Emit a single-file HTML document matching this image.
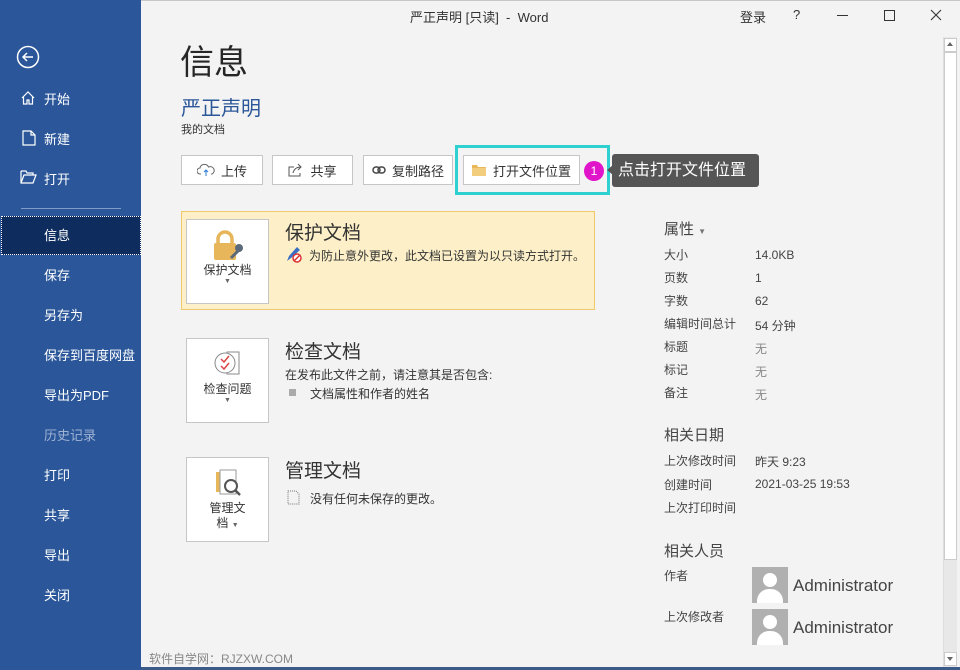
<!DOCTYPE html>
<html><head><meta charset="utf-8"><style>
*{margin:0;padding:0;box-sizing:border-box}
body{width:960px;height:670px;overflow:hidden;background:#f3f3f3;font-family:"Liberation Sans","Noto Sans CJK SC",sans-serif;position:relative;color:#444}
.abs{position:absolute}
.side{left:0;top:0;width:141px;height:670px;background:#2b579a;color:#fff}
.side .it{position:absolute;left:44px;font-size:13px;color:#fff}
.t13{font-size:13px}
.btn{position:absolute;top:155px;height:30px;border:1px solid #c6c6c6;background:#fff;font-size:13px;color:#333;display:flex;align-items:center;justify-content:center;gap:6px}
.card{position:absolute;width:83px;height:85px;border:1px solid #c6c6c6;background:#fff;font-size:12px;color:#333;text-align:center}
.h2{position:absolute;font-size:19px;color:#333}
.lbl{position:absolute;left:664px;font-size:12px;color:#444}
.val{position:absolute;left:755px;font-size:12px;color:#444}
.h3{position:absolute;left:664px;font-size:15px;color:#444}
.av{position:absolute;left:752px;width:36px;height:36px;background:#b0b0b0;overflow:hidden}
.av:before{content:"";position:absolute;left:11px;top:6px;width:14px;height:14px;border-radius:50%;background:#fff}
.av:after{content:"";position:absolute;left:5px;top:22px;width:26px;height:20px;border-radius:12px 12px 0 0;background:#fff}
</style></head><body>
<div class="abs side">
  <svg class="abs" style="left:16px;top:45px" width="24" height="24" viewBox="0 0 24 24"><circle cx="12" cy="12" r="10.5" fill="none" stroke="#fff" stroke-width="1.5"/><path d="M17 12H7M11 8l-4 4 4 4" fill="none" stroke="#fff" stroke-width="1.5"/></svg>
  <svg class="abs" style="left:20px;top:90px" width="16" height="16" viewBox="0 0 16 16"><path d="M2 8L8 2l6 6M3.5 7v7h3.5v-4h2v4h3.5V7" fill="none" stroke="#fff" stroke-width="1.2"/></svg>
  <div class="it" style="top:89px">开始</div>
  <svg class="abs" style="left:22px;top:130px" width="14" height="16" viewBox="0 0 14 16"><path d="M1 1h8l4 4v10H1z M9 1v4h4" fill="none" stroke="#fff" stroke-width="1.2"/></svg>
  <div class="it" style="top:129px">新建</div>
  <svg class="abs" style="left:20px;top:170px" width="17" height="14" viewBox="0 0 17 14"><path d="M1 1h5l1 2h6v2M1 1v12h12l3-8H4L1 13" fill="none" stroke="#fff" stroke-width="1.2"/></svg>
  <div class="it" style="top:169px">打开</div>
  <div class="abs" style="left:21px;top:208px;width:100px;height:1px;background:#7f9cc7"></div>
  <div class="abs" style="left:1px;top:216px;width:140px;height:39px;background:#0e2d5e;border:1px dotted #fff"></div>
  <div class="it" style="top:225px">信息</div>
  <div class="it" style="top:265px">保存</div>
  <div class="it" style="top:305px">另存为</div>
  <div class="it" style="top:345px">保存到百度网盘</div>
  <div class="it" style="top:385px">导出为PDF</div>
  <div class="it" style="top:425px;color:#9fb3d3">历史记录</div>
  <div class="it" style="top:465px">打印</div>
  <div class="it" style="top:505px">共享</div>
  <div class="it" style="top:545px">导出</div>
  <div class="it" style="top:585px">关闭</div>
</div>
<div class="abs" style="left:141px;top:0;width:819px;height:1px;background:#c8c8c8"></div>
<div class="abs t13" style="left:410px;top:7px;color:#333">严正声明 [只读] &nbsp;-&nbsp; Word</div>
<div class="abs t13" style="left:740px;top:7px;color:#333">登录</div>
<div class="abs t13" style="left:793px;top:7px;color:#333">?</div>
<div class="abs" style="left:837px;top:15px;width:11px;height:1px;background:#333"></div>
<div class="abs" style="left:884px;top:10px;width:11px;height:11px;border:1px solid #333"></div>
<svg class="abs" style="left:930px;top:9px" width="12" height="12"><path d="M1 1l10 10M11 1L1 11" stroke="#333" stroke-width="1.1"/></svg>
<div class="abs" style="left:943px;top:37px;width:14px;height:630px;background:#e8e8e8;border-left:1px solid #ddd"></div>
<div class="abs" style="left:944px;top:38px;width:13px;height:14px;background:#fff;border:1px solid #ccc"></div>
<div class="abs" style="left:947px;top:42px;border:3px solid transparent;border-bottom:4px solid #666;border-top:0"></div>
<div class="abs" style="left:944px;top:52px;width:13px;height:508px;background:#fff;border:1px solid #ccc"></div>
<div class="abs" style="left:944px;top:652px;width:13px;height:14px;background:#fff;border:1px solid #ccc"></div>
<div class="abs" style="left:947px;top:657px;border:3px solid transparent;border-top:4px solid #666;border-bottom:0"></div>
<div class="abs" style="left:141px;top:667px;width:819px;height:3px;background:#3b5a8a"></div>

<div class="abs" style="left:180px;top:35px;font-size:34px;color:#262626">信息</div>
<div class="abs" style="left:181px;top:92px;font-size:20px;color:#2b579a">严正声明</div>
<div class="abs" style="left:181px;top:121px;font-size:11px;color:#333">我的文档</div>

<div class="btn" style="left:181px;width:82px"><svg width="18" height="14" viewBox="0 0 18 14"><path d="M4 11H3a3 3 0 010-6 4.5 4.5 0 018.5-1A3 3 0 0115 11h-1" fill="none" stroke="#666"/><path d="M9 13V7M7 9l2-2 2 2" stroke="#2b7bd6" fill="none"/></svg>上传</div>
<div class="btn" style="left:272px;width:81px"><svg width="16" height="14" viewBox="0 0 16 14"><path d="M6 4H1v9h11v-3M5 10c1-4 4-6 8-6M10 1l3 3-3 3" fill="none" stroke="#555"/></svg>共享</div>
<div class="btn" style="left:363px;width:90px"><svg width="14" height="8" viewBox="0 0 14 8"><rect x="1" y="1" width="7" height="6" rx="3" fill="none" stroke="#444" stroke-width="1.5"/><rect x="6" y="1" width="7" height="6" rx="3" fill="none" stroke="#444" stroke-width="1.5"/></svg>复制路径</div>
<div class="abs" style="left:455px;top:145px;width:155px;height:50px;border:3px solid #2ed0d0"></div>
<div class="btn" style="left:463px;width:117px"><svg width="15" height="12" viewBox="0 0 15 12"><path d="M0 1h5l1 2h8v9H0z" fill="#e8b85a"/><path d="M0 4h14v8H0z" fill="#f2cd7e"/></svg>打开文件位置</div>
<div class="abs" style="left:584px;top:161px;width:20px;height:20px;border-radius:50%;background:#e014c8;color:#fff;font-size:12px;text-align:center;line-height:20px">1</div>
<div class="abs" style="left:607px;top:165px;border:5px solid transparent;border-right:6px solid #555;border-left:0"></div>
<div class="abs" style="left:612px;top:154px;width:147px;height:33px;background:#555;border-radius:3px;color:#fff;font-size:16px;line-height:33px;padding-left:6px">点击打开文件位置</div>

<div class="abs" style="left:181px;top:211px;width:414px;height:99px;background:#fdf0c8;border:1px solid #f0c86e"></div>
<div class="card" style="left:186px;top:219px">
 <svg style="margin-top:10px" width="34" height="32" viewBox="0 0 34 32"><path d="M7 13V9a7 7 0 0114 0v4" fill="none" stroke="#e8b65a" stroke-width="3.5"/><rect x="3" y="13" width="22" height="17" rx="2" fill="#e8b65a"/><path d="M20 28l8-8" stroke="#5a6a7a" stroke-width="3"/><circle cx="28" cy="18" r="4" fill="#5a6a7a"/></svg>
 <div style="margin-top:-4px">保护文档</div><div style="font-size:7px;color:#666">▼</div></div>
<div class="h2" style="left:285px;top:218px">保护文档</div>
<svg class="abs" style="left:285px;top:245px" width="18" height="18" viewBox="0 0 18 18"><path d="M2 16l2-5 8-9 3 3-9 8z" fill="#3a6fc4"/><circle cx="12" cy="13" r="4" fill="#fff" stroke="#d33" stroke-width="1.5"/><path d="M9.5 15.5l5-5" stroke="#d33" stroke-width="1.5"/></svg>
<div class="abs" style="left:309px;top:247px;font-size:12px;color:#333">为防止意外更改，此文档已设置为以只读方式打开。</div>

<div class="card" style="left:186px;top:338px">
 <svg style="margin-top:10px" width="30" height="28" viewBox="0 0 30 28"><rect x="14" y="3" width="12" height="22" fill="#fff" stroke="#888"/><circle cx="12" cy="14" r="10" fill="#fff" stroke="#888"/><path d="M8 10l3 3 5-6M8 17l3 3 5-6" fill="none" stroke="#d44" stroke-width="1.5"/></svg>
 <div>检查问题</div><div style="font-size:7px;color:#666">▼</div></div>
<div class="h2" style="left:285px;top:337px">检查文档</div>
<div class="abs" style="left:285px;top:366px;font-size:12px;color:#333">在发布此文件之前，请注意其是否包含:</div>
<div class="abs" style="left:289px;top:389px;width:7px;height:7px;background:#aaa"></div>
<div class="abs" style="left:310px;top:385px;font-size:12px;color:#333">文档属性和作者的姓名</div>

<div class="card" style="left:186px;top:457px">
 <svg style="margin-top:10px" width="32" height="30" viewBox="0 0 32 30"><rect x="4" y="4" width="14" height="20" fill="#e8b65a"/><rect x="8" y="2" width="16" height="24" fill="#fff" stroke="#999"/><circle cx="19" cy="18" r="6" fill="#fff" stroke="#555" stroke-width="2"/><path d="M23 22l5 5" stroke="#555" stroke-width="2.5"/></svg>
 <div style="line-height:15px">管理文<br>档 <span style="font-size:7px;color:#666">▼</span></div></div>
<div class="h2" style="left:285px;top:456px">管理文档</div>
<svg class="abs" style="left:287px;top:490px" width="13" height="15"><path d="M1 1h8l3 3v10H1z" fill="none" stroke="#777" stroke-dasharray="1 1"/></svg>
<div class="abs" style="left:310px;top:490px;font-size:12px;color:#333">没有任何未保存的更改。</div>

<div class="h3" style="left:664px;top:218px">属性 <span style="font-size:8px;color:#777">▼</span></div>
<div class="lbl" style="top:246px">大小</div><div class="val" style="top:248px">14.0KB</div>
<div class="lbl" style="top:269px">页数</div><div class="val" style="top:271px">1</div>
<div class="lbl" style="top:292px">字数</div><div class="val" style="top:294px">62</div>
<div class="lbl" style="top:315px">编辑时间总计</div><div class="val" style="top:317px">54 分钟</div>
<div class="lbl" style="top:338px">标题</div><div class="val" style="top:340px;color:#888">无</div>
<div class="lbl" style="top:361px">标记</div><div class="val" style="top:363px;color:#888">无</div>
<div class="lbl" style="top:384px">备注</div><div class="val" style="top:386px;color:#888">无</div>
<div class="h3" style="top:424px">相关日期</div>
<div class="lbl" style="top:452px">上次修改时间</div><div class="val" style="top:453px">昨天 9:23</div>
<div class="lbl" style="top:476px">创建时间</div><div class="val" style="top:477px">2021-03-25 19:53</div>
<div class="lbl" style="top:499px">上次打印时间</div>
<div class="h3" style="top:540px">相关人员</div>
<div class="lbl" style="top:567px">作者</div>
<div class="av" style="top:567px"></div><div class="abs" style="left:793px;top:576px;font-size:17px;color:#444">Administrator</div>
<div class="lbl" style="top:608px">上次修改者</div>
<div class="av" style="top:609px"></div><div class="abs" style="left:793px;top:618px;font-size:17px;color:#444">Administrator</div>

<div class="abs" style="left:149px;top:650px;font-size:12px;color:#888">软件自学网：RJZXW.COM</div>
</body></html>
